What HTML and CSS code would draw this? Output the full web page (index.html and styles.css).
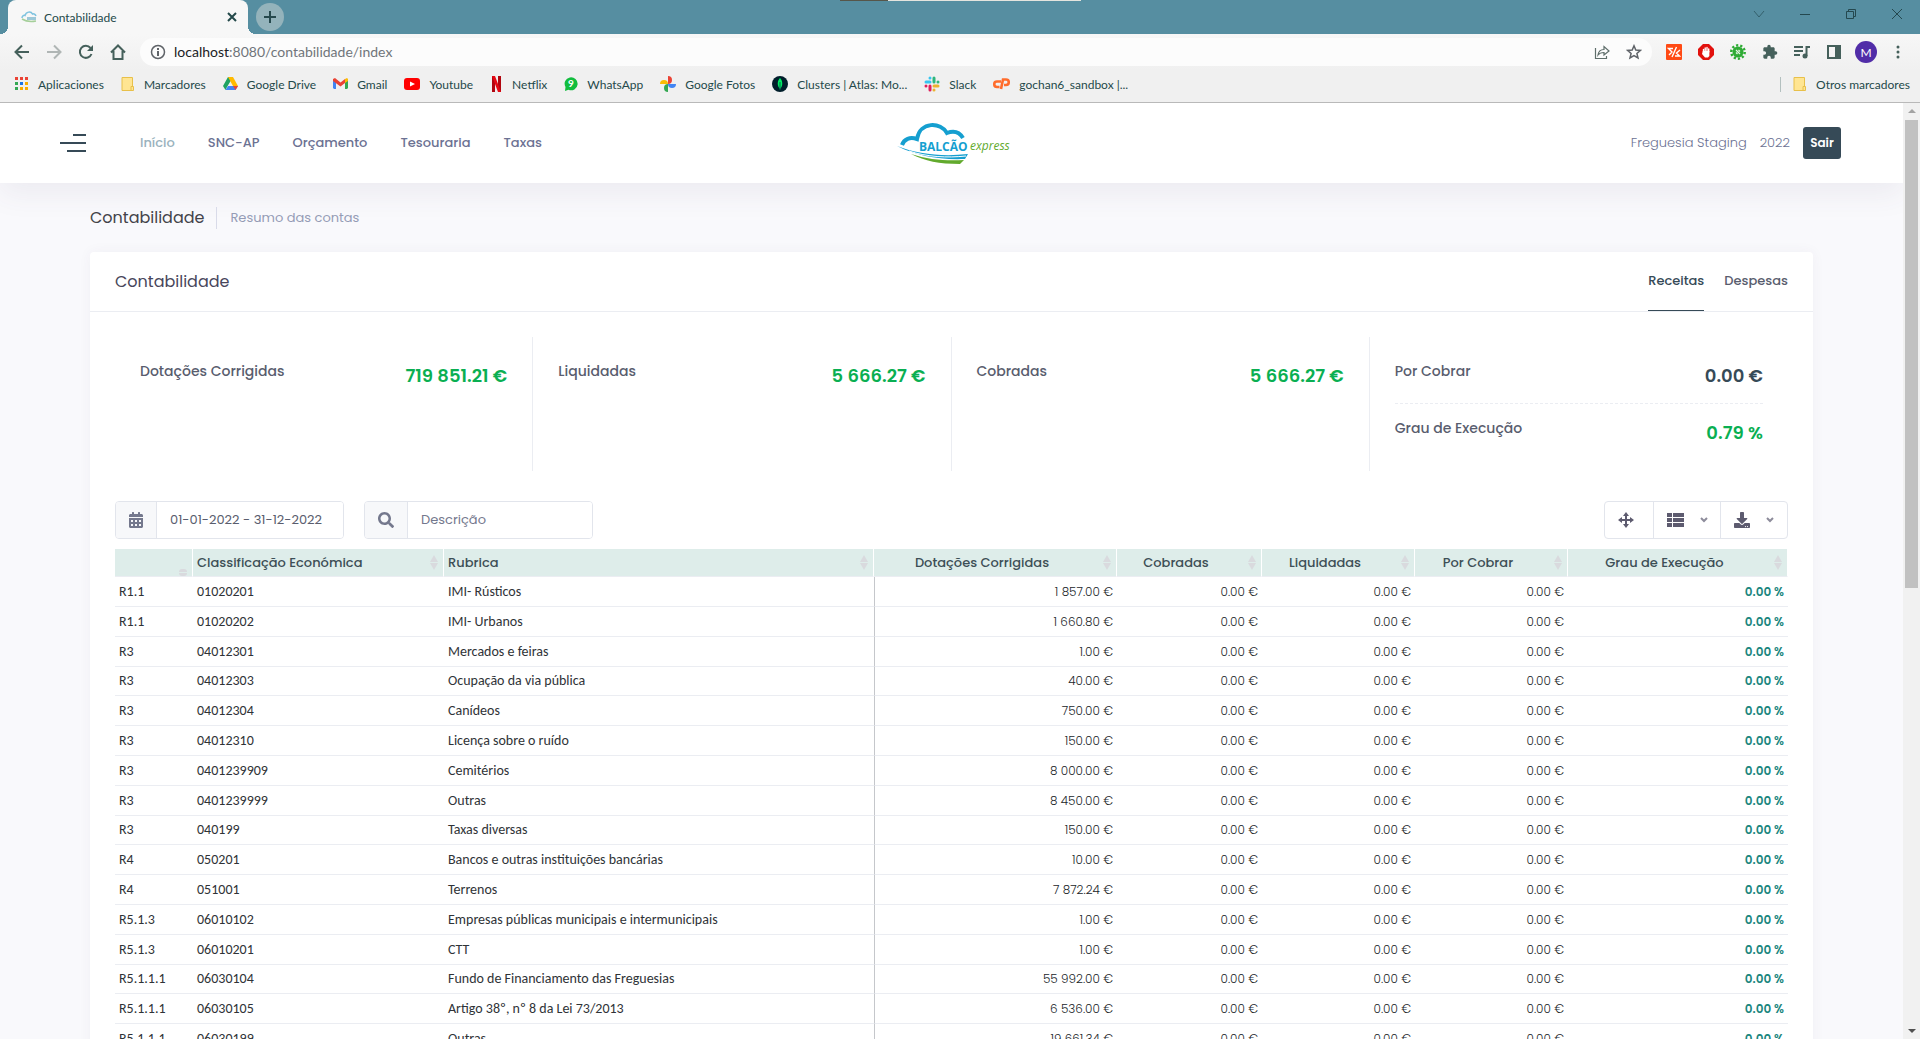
FILE: index.html
```html
<!DOCTYPE html>
<html lang="pt">
<head>
  <meta charset="UTF-8">
  <meta name="viewport" content="width=device-width, initial-scale=1.0">
  <title>Contabilidade</title>
  <link rel="stylesheet" href="styles.css">
</head>
<body>
  <div class="browser">
    <div class="tab-strip">
      <div class="tab">
        <svg width="16" height="12" viewBox="0 0 16 12"><path d="M1 7C1 5 2.500 4 4 4.500C5 0.500 10 0 11.500 3C13 2.500 14.500 3.500 15 5" fill="none" stroke="#7fc3df" stroke-width="1.500"/><path d="M6 6h9v3H6z" fill="#9cc8d8"/><path d="M1 8C5 10.500 10 11 15 10" fill="none" stroke="#a5cf9a" stroke-width="1.500"/></svg>
        <span class="tab-title">Contabilidade</span>
        <button class="tab-close" aria-label="Fechar"><svg width="10" height="10" viewBox="0 0 10 10"><path d="M1 1L9 9M9 1L1 9" stroke="#24494a" stroke-width="2"/></svg></button>
      </div>
      <button class="new-tab" aria-label="Novo separador"><svg width="12" height="12" viewBox="0 0 12 12"><path d="M6 0V12M0 6H12" stroke="#26494d" stroke-width="2"/></svg></button>
      <div class="drag-handle"></div>
      <div class="window-controls">
        <button aria-label="Procurar separadores"><svg width="12" height="12" viewBox="0 0 12 12"><path d="M1 3L6 9L11 3" fill="none" stroke="#34606c"/></svg></button>
        <button aria-label="Minimizar"><svg width="12" height="12" viewBox="0 0 12 12"><path d="M1 6.500H11" stroke="#24484f"/></svg></button>
        <button aria-label="Restaurar"><svg width="12" height="12" viewBox="0 0 12 12"><path d="M1.500 3.500h7v7h-7zM3.500 3.500v-2h7v7h-2" fill="none" stroke="#24484f"/></svg></button>
        <button aria-label="Fechar janela"><svg width="12" height="12" viewBox="0 0 12 12"><path d="M1 1L11 11M11 1L1 11" stroke="#24484f"/></svg></button>
      </div>
    </div>

    <div class="toolbar">
      <button class="tool" aria-label="Recuar"><svg width="16" height="16" viewBox="0 0 16 16"><path d="M15 8H2M8 1.500L1.500 8L8 14.500" fill="none" stroke="#45605b" stroke-width="2"/></svg></button>
      <button class="tool" aria-label="Avançar"><svg width="16" height="16" viewBox="0 0 16 16"><path d="M1 8H14M8 1.500L14.500 8L8 14.500" fill="none" stroke="#b0b6b5" stroke-width="2"/></svg></button>
      <button class="tool" aria-label="Atualizar"><svg width="16" height="16" viewBox="0 0 16 16"><path d="M13.500 10A6 6 0 1 1 12.500 4" fill="none" stroke="#45605b" stroke-width="2"/><path d="M15 1V7H9z" fill="#45605b"/></svg></button>
      <button class="tool" aria-label="Início"><svg width="16" height="16" viewBox="0 0 16 16"><path d="M1 8.500L8 1.500L15 8.500M3.500 7V15H12.500V7" fill="none" stroke="#45605b" stroke-width="2"/></svg></button>
      <div class="omnibox">
        <svg width="16" height="16" viewBox="0 0 16 16"><circle cx="8" cy="8" r="6.500" fill="none" stroke="#5f6368" stroke-width="1.500"/><path d="M8 7V12M8 4V6" stroke="#5f6368" stroke-width="2"/></svg>
        <div class="url"><span class="host">localhost</span>:8080/contabilidade/index</div>
        <button class="tool" aria-label="Partilhar"><svg width="16" height="16" viewBox="0 0 16 16"><path d="M1.500 4V14.500H12.500V12M4 11C4.500 7 7 5.500 10 5.500V2.500L15 7L10 11V8.500C7.500 8.500 5.500 9 4 11Z" fill="none" stroke="#5f6e6b" stroke-width="1.200"/></svg></button>
        <button class="tool" aria-label="Favorito"><svg width="16" height="16" viewBox="0 0 16 16"><path d="M8 1.800L9.800 6L14.300 6.400L10.900 9.400L12 13.900L8 11.500L4 13.900L5.100 9.400L1.700 6.400L6.200 6Z" fill="none" stroke="#5f6368" stroke-width="1.500"/></svg></button>
      </div>
      <div class="extensions">
        <button class="tool" aria-label="Extensão"><svg width="16" height="16" viewBox="0 0 16 16"><rect width="16" height="16" rx="1" fill="#ff4a14"/><path d="M7 4.500H2.500L6 8L3 11M10.500 3L6 13M9 12H13.500L10.500 9L14 6" fill="none" stroke="#fff" stroke-width="1.400"/></svg></button>
        <button class="tool" aria-label="AdBlock"><svg width="16" height="16" viewBox="0 0 16 16"><path d="M5 0H11L16 5V11L11 16H5L0 11V5Z" fill="#e2110d"/><path d="M5.500 8V5.500M7.200 8V4M9 8V3.500M10.700 8V5" stroke="#fff" stroke-width="1.400" stroke-linecap="round"/><path d="M4.800 7h6.600v5L10 13.500H7L4 10z" fill="#fff"/></svg></button>
        <button class="tool" aria-label="Extensão"><svg width="16" height="16" viewBox="0 0 16 16"><circle cx="8" cy="8" r="5.500" fill="#2fab35"/><circle cx="8" cy="8" r="6.700" fill="none" stroke="#2fab35" stroke-width="2.500" stroke-dasharray="2.200 2"/><path d="M6 6l4 4M6 8.500L7.500 10M8.500 6L10 7.500" stroke="#e8f5e8" stroke-width="1.200"/></svg></button>
        <button class="tool" aria-label="Extensões"><svg width="16" height="16" viewBox="0 0 24 24"><path d="M20.500 11H19V7c0-1.100-.9-2-2-2h-4V3.500a2.500 2.500 0 0 0-5 0V5H4c-1.100 0-2 .9-2 2v3.800h1.500a2.700 2.700 0 0 1 0 5.400H2V20c0 1.100.9 2 2 2h3.800v-1.500a2.700 2.700 0 0 1 5.400 0V22H17c1.100 0 2-.9 2-2v-4h1.500a2.500 2.500 0 0 0 0-5z" fill="#45605b"/></svg></button>
        <button class="tool" aria-label="Multimédia"><svg width="16" height="16" viewBox="0 0 16 16"><path d="M0 3H9M0 7H9M0 11H6M12.500 12V3H16" fill="none" stroke="#45605b" stroke-width="2"/><circle cx="11" cy="12" r="2.500" fill="#45605b"/></svg></button>
        <button class="tool" aria-label="Painel lateral"><svg width="16" height="16" viewBox="0 0 16 16"><path d="M2 2H14V14H2Z" fill="none" stroke="#45605b" stroke-width="2"/><path d="M9 2H14V14H9Z" fill="#45605b"/></svg></button>
        <button class="avatar">M</button>
        <button class="tool" aria-label="Menu"><svg width="16" height="16" viewBox="0 0 16 16"><circle cx="8" cy="3" r="1.500" fill="#45605b"/><circle cx="8" cy="8" r="1.500" fill="#45605b"/><circle cx="8" cy="13" r="1.500" fill="#45605b"/></svg></button>
      </div>
    </div>

    <div class="bookmarks">
      <a href="#"><svg width="14" height="14" viewBox="0 0 14 14"><path d="M0 0h3v3H0zM5 0h3v3H5zM10 0h3v3h-3z" fill="#ea4335"/><path d="M0 5h3v3H0z" fill="#34a853"/><path d="M5 5h3v3H5z" fill="#1a73e8"/><path d="M10 5h3v3h-3zM5 10h3v3H5zM10 10h3v3h-3z" fill="#f9ab00"/><path d="M0 10h3v3H0z" fill="#34a853"/></svg>Aplicaciones</a>
      <a href="#"><svg width="14" height="14" viewBox="0 0 14 14"><path d="M1 .5H11.500V13.500H1Z" fill="#ffe592" stroke="#e8c04a"/><path d="M10 9.500h2.500v4H10z" fill="#ffe592" stroke="#e8c04a"/></svg>Marcadores</a>
      <a href="#"><svg width="15" height="14" viewBox="0 0 15 14"><path d="M5 0H10L4 10L2.500 13L0 9Z" fill="#1ea362"/><path d="M5 0H10L15 9H10Z" fill="#ffba00"/><path d="M5 9H15L12.500 13H2.500Z" fill="#4285f4"/><path d="M10 9H15L12.500 13Z" fill="#ea4335"/></svg>Google Drive</a>
      <a href="#"><svg width="15" height="12" viewBox="0 0 15 12"><path d="M0 2H3V11H1L0 10Z" fill="#4285f4"/><path d="M12 2H15V10L14 11H12Z" fill="#34a853"/><path d="M0 2V1L2 0L7.500 4.500L12 1V5L7.500 8.500L0 3Z" fill="#ea4335"/><path d="M12 1L14 0L15 1V3L12 5Z" fill="#fbbc04"/></svg>Gmail</a>
      <a href="#"><svg width="16" height="12" viewBox="0 0 16 12"><rect width="16" height="12" rx="3" fill="#f00"/><path d="M6 3.500L11 6L6 8.500Z" fill="#fff"/></svg>Youtube</a>
      <a href="#"><svg width="13" height="16" viewBox="2 0 13 16"><path d="M4 0H7V16H4ZM10 0H13V16H10Z" fill="#b1060f"/><path d="M4 0H7L13 16H10Z" fill="#e50914"/></svg>Netflix</a>
      <a href="#"><svg width="14" height="16" viewBox="1 0 14 16"><path d="M2 15L2.500 11A6.500 6.500 0 1 1 5.500 13.700Z" fill="#12bd3e"/><text x="8" y="11" class="icon-digit">9</text></svg>WhatsApp</a>
      <a href="#"><svg width="16" height="16" viewBox="0 0 16 16"><path d="M8 0A4 4 0 0 1 8 8Z" fill="#ea4335"/><path d="M16 8A4 4 0 0 1 8 8Z" fill="#4285f4"/><path d="M8 16A4 4 0 0 1 8 8Z" fill="#34a853"/><path d="M0 8A4 4 0 0 1 8 8Z" fill="#fbbc04"/></svg>Google Fotos</a>
      <a href="#"><svg width="16" height="16" viewBox="0 0 16 16"><circle cx="8" cy="8" r="8" fill="#001e2b"/><path d="M8 2C5 5 5 10 8 13C11 10 11 5 8 2Z" fill="#00ed64"/><path d="M8 6V14" stroke="#00684a"/></svg>Clusters | Atlas: Mo...</a>
      <a href="#"><svg width="16" height="16" viewBox="0 0 16 16"><g fill="none" stroke-width="3" stroke-linecap="round"><path d="M2 6H6M6 2V2" stroke="#36c5f0"/><path d="M10 2V6M14 6V6" stroke="#2eb67d"/><path d="M10 10H14M10 14V14" stroke="#ecb22e"/><path d="M6 10V14M2 10V10" stroke="#e01e5a"/></g></svg>Slack</a>
      <a href="#"><svg width="17" height="12" viewBox="0 0 17 12"><path d="M8 3.500H4A2.700 2.700 0 0 0 4 9H6.500M8 11L10 1.500H13A2.700 2.700 0 0 1 13 7H11" fill="none" stroke="#ff6c2c" stroke-width="2.600"/></svg>gochan6_sandbox |...</a>
      <a href="#" class="other-bookmarks"><svg width="14" height="14" viewBox="0 0 14 14"><path d="M1 .5H11.500V13.500H1Z" fill="#ffe592" stroke="#e8c04a"/><path d="M10 9.500h2.500v4H10z" fill="#ffe592" stroke="#e8c04a"/></svg>Otros marcadores</a>
    </div>
  </div>

  <div class="viewport">
    <div class="page">
      <header class="header">
        <div class="menu">
          <button class="hamburger" aria-label="Menu"><span></span><span></span><span></span></button>
          <nav class="nav">
            <a href="#" class="active">Início</a>
            <a href="#">SNC-AP</a>
            <a href="#">Orçamento</a>
            <a href="#">Tesouraria</a>
            <a href="#">Taxas</a>
          </nav>
        </div>
        <a href="#" class="logo" aria-label="Balcão express">
          <svg width="120" height="48" viewBox="-6 -3 120 48">
            <path d="M5 23C7 17 13 14.500 20 17C23 -1 44 0 50 11C58 8 63 11 66 16" fill="none" stroke="#159fd0" stroke-width="4"/>
            <path d="M0 24C20 32 45 35 71 32L68 37C42 38 20 34 0 24Z" fill="#159fd0"/>
            <path d="M14 32C32 38 50 39 67 38L63 42C42 42 28 39 14 32Z" fill="#62aa2d"/>
            <path d="M12 29C30 35 50 36 69 34" fill="none" stroke="#fff"/>
            <text x="22" y="29" class="logo-name">BALCÃO</text>
            <text x="73" y="28" class="logo-sub">express</text>
          </svg>
        </a>
        <div class="user">
          <span>Freguesia Staging</span>
          <span>2022</span>
          <button class="btn-exit">Sair</button>
        </div>
      </header>

      <div class="subheader">
        <h1>Contabilidade</h1>
        <span class="separator"></span>
        <span class="subtitle">Resumo das contas</span>
      </div>

      <main class="card">
        <div class="card-head">
          <h2>Contabilidade</h2>
          <div class="tabs">
            <a href="#" class="active">Receitas</a>
            <a href="#">Despesas</a>
          </div>
        </div>

        <div class="card-body">
          <div class="stats">
            <div class="stat">
              <div class="stat-row"><span>Dotações Corrigidas</span><strong class="green">719 851.21 €</strong></div>
            </div>
            <div class="stat">
              <div class="stat-row"><span>Liquidadas</span><strong class="green">5 666.27 €</strong></div>
            </div>
            <div class="stat">
              <div class="stat-row"><span>Cobradas</span><strong class="green">5 666.27 €</strong></div>
            </div>
            <div class="stat">
              <div class="stat-row"><span>Por Cobrar</span><strong>0.00 €</strong></div>
              <div class="stat-row dashed"><span>Grau de Execução</span><strong class="green">0.79 %</strong></div>
            </div>
          </div>

          <div class="filters">
            <div class="input-group">
              <label for="dates" aria-label="Datas"><svg width="14" height="16" viewBox="0 0 448 512"><path fill="currentColor" d="M0 464c0 26.500 21.500 48 48 48h352c26.500 0 48-21.500 48-48V192H0v272zm320-196c0-6.600 5.400-12 12-12h40c6.600 0 12 5.400 12 12v40c0 6.600-5.400 12-12 12h-40c-6.600 0-12-5.400-12-12v-40zm0 128c0-6.600 5.400-12 12-12h40c6.600 0 12 5.400 12 12v40c0 6.600-5.400 12-12 12h-40c-6.600 0-12-5.400-12-12v-40zM192 268c0-6.600 5.400-12 12-12h40c6.600 0 12 5.400 12 12v40c0 6.600-5.400 12-12 12h-40c-6.600 0-12-5.400-12-12v-40zm0 128c0-6.600 5.400-12 12-12h40c6.600 0 12 5.400 12 12v40c0 6.600-5.400 12-12 12h-40c-6.600 0-12-5.400-12-12v-40zM64 268c0-6.600 5.400-12 12-12h40c6.600 0 12 5.400 12 12v40c0 6.600-5.400 12-12 12H76c-6.600 0-12-5.400-12-12v-40zm0 128c0-6.600 5.400-12 12-12h40c6.600 0 12 5.400 12 12v40c0 6.600-5.400 12-12 12H76c-6.600 0-12-5.400-12-12v-40zM400 64h-48V16c0-8.800-7.200-16-16-16h-32c-8.800 0-16 7.200-16 16v48H160V16c0-8.800-7.200-16-16-16h-32c-8.800 0-16 7.200-16 16v48H48C21.500 64 0 85.500 0 112v48h448v-48c0-26.500-21.500-48-48-48z"/></svg></label>
              <input type="text" id="dates" value="01-01-2022 - 31-12-2022">
            </div>
            <div class="input-group">
              <label for="search" aria-label="Descrição"><svg width="16" height="16" viewBox="0 0 512 512"><path fill="currentColor" d="M505 442.700L405.300 343c-4.500-4.500-10.600-7-17-7H372c27.600-35.300 44-79.700 44-128C416 93.100 322.900 0 208 0S0 93.100 0 208s93.100 208 208 208c48.300 0 92.700-16.400 128-44v16.300c0 6.400 2.500 12.500 7 17l99.700 99.700c9.400 9.400 24.600 9.400 33.900 0l28.300-28.300c9.400-9.400 9.400-24.600.1-34zM208 336c-70.700 0-128-57.200-128-128 0-70.700 57.200-128 128-128 70.700 0 128 57.200 128 128 0 70.700-57.200 128-128 128z"/></svg></label>
              <input type="text" id="search" placeholder="Descrição">
            </div>
            <div class="btn-group">
              <button aria-label="Expandir"><svg width="16" height="16" viewBox="0 0 16 16"><path d="M8 2V14M2 8H14" stroke="currentColor" stroke-width="2"/><path d="M8 0L11 4H5ZM8 16L11 12H5ZM0 8L4 5V11ZM16 8L12 5V11Z" fill="currentColor"/></svg></button>
              <button aria-label="Colunas"><svg width="17" height="16" viewBox="0 0 17 16"><path d="M0 1h5v4H0zM6 1h11v4H6zM0 6h5v4H0zM6 6h11v4H6zM0 11h5v4H0zM6 11h11v4H6z" fill="currentColor"/></svg><svg class="caret" width="8" height="6" viewBox="0 0 8 6"><path d="M1 1L4 4L7 1" fill="none" stroke="currentColor" stroke-width="2"/></svg></button>
              <button aria-label="Exportar"><svg width="16" height="16" viewBox="0 0 512 512"><path fill="currentColor" d="M216 0h80c13.300 0 24 10.700 24 24v168h87.700c17.800 0 26.700 21.500 14.100 34.100L269.700 378.300c-7.500 7.500-19.800 7.500-27.300 0L90.100 226.100c-12.600-12.600-3.700-34.100 14.100-34.100H192V24c0-13.300 10.700-24 24-24zm296 376v112c0 13.300-10.700 24-24 24H24c-13.300 0-24-10.700-24-24V376c0-13.300 10.700-24 24-24h146.700l49 49c20.100 20.100 52.500 20.100 72.600 0l49-49H488c13.300 0 24 10.700 24 24zm-124 88c0-11-9-20-20-20s-20 9-20 20 9 20 20 20 20-9 20-20zm64 0c0-11-9-20-20-20s-20 9-20 20 9 20 20 20 20-9 20-20z"/></svg><svg class="caret" width="8" height="6" viewBox="0 0 8 6"><path d="M1 1L4 4L7 1" fill="none" stroke="currentColor" stroke-width="2"/></svg></button>
            </div>
          </div>

          <table class="grid">
            <colgroup>
              <col class="col-group"><col class="col-class"><col><col class="col-total"><col class="col-amount"><col class="col-liq"><col class="col-liq"><col class="col-grade">
            </colgroup>
            <thead>
              <tr>
                <th><div class="th empty"><span></span><i class="sort"></i></div></th>
                <th><div class="th"><span>Classificação Económica</span><i class="sort"></i></div></th>
                <th><div class="th"><span>Rubrica</span><i class="sort"></i></div></th>
                <th><div class="th center"><span>Dotações Corrigidas</span><i class="sort"></i></div></th>
                <th><div class="th center"><span>Cobradas</span><i class="sort"></i></div></th>
                <th><div class="th center"><span>Liquidadas</span><i class="sort"></i></div></th>
                <th><div class="th center"><span>Por Cobrar</span><i class="sort"></i></div></th>
                <th><div class="th center"><span>Grau de Execução</span><i class="sort"></i></div></th>
              </tr>
            </thead>
            <tbody id="rows"></tbody>
          </table>
        </div>
      </main>
    </div>
    <div class="scrollbar"><i class="arrow up"></i><span class="thumb"></span><i class="arrow down"></i></div>
  </div>

  <script>
    var rows = [
      ['R1.1', '01020201', 'IMI- Rústicos', '1 857.00 €'],
      ['R1.1', '01020202', 'IMI- Urbanos', '1 660.80 €'],
      ['R3', '04012301', 'Mercados e feiras', '1.00 €'],
      ['R3', '04012303', 'Ocupação da via pública', '40.00 €'],
      ['R3', '04012304', 'Canídeos', '750.00 €'],
      ['R3', '04012310', 'Licença sobre o ruído', '150.00 €'],
      ['R3', '0401239909', 'Cemitérios', '8 000.00 €'],
      ['R3', '0401239999', 'Outras', '8 450.00 €'],
      ['R3', '040199', 'Taxas diversas', '150.00 €'],
      ['R4', '050201', 'Bancos e outras instituições bancárias', '10.00 €'],
      ['R4', '051001', 'Terrenos', '7 872.24 €'],
      ['R5.1.3', '06010102', 'Empresas públicas municipais e intermunicipais', '1.00 €'],
      ['R5.1.3', '06010201', 'CTT', '1.00 €'],
      ['R5.1.1.1', '06030104', 'Fundo de Financiamento das Freguesias', '55 992.00 €'],
      ['R5.1.1.1', '06030105', 'Artigo 38º, nº 8 da Lei 73/2013', '6 536.00 €'],
      ['R5.1.1.1', '06030199', 'Outras', '19 661.34 €']
    ];

    var html = '';
    rows.forEach(function(row) {
      html += `
        <tr>
          <td>${row[0]}</td>
          <td>${row[1]}</td>
          <td>${row[2]}</td>
          <td class="num total">${row[3]}</td>
          <td class="num">0.00 €</td>
          <td class="num">0.00 €</td>
          <td class="num">0.00 €</td>
          <td class="num grade">0.00 %</td>
        </tr>
      `;
    });
    document.getElementById('rows').innerHTML = html;
  </script>
</body>
</html>
```
FILE: styles.css
```css
* {
  box-sizing: border-box;
}

body {
  display: flex;
  flex-direction: column;
  height: 100vh;
  margin: 0;
  overflow: hidden;
  font-family: Poppins, Inter, sans-serif;
  font-size: 13px;
  color: #646c9a;
  background-color: #f9f9fc;
}

a {
  color: inherit;
  text-decoration: none;
}

button {
  display: flex;
  align-items: center;
  justify-content: center;
  padding: 0;
  border: none;
  background: none;
  font-family: inherit;
  cursor: pointer;
}

svg {
  flex: none;
  display: block;
}

/* browser window */
.browser {
  flex: none;
  font-family: "Segoe UI", Lato, sans-serif;
  font-size: 12px;
  color: #24494a;
  background-color: #f0f0f0;
  border-bottom: 1px solid #b9b9b9;
}

.tab-strip {
  position: relative;
  display: flex;
  height: 34px;
  padding-left: 8px;
  background-color: #568ea1;
}

.drag-handle {
  position: absolute;
  top: 0;
  left: 840px;
  width: 241px;
  height: 1px;
  background-color: #e4e4de;
  border-left: 48px solid #56564a;
}

.tab {
  position: relative;
  display: flex;
  align-items: center;
  width: 240px;
  padding: 0 8px 0 13px;
  background-color: #f7f7f7;
  border-radius: 8px 8px 0 0;
}

.tab::before,
.tab::after {
  content: "";
  position: absolute;
  bottom: 0;
  left: -8px;
  width: 8px;
  height: 8px;
  background: radial-gradient(circle at 0 0, transparent 8px, #f7f7f7 8px);
}

.tab::after {
  left: 240px;
  background: radial-gradient(circle at 8px 0, transparent 8px, #f7f7f7 8px);
}

.tab-title {
  flex: 1;
  margin-left: 7px;
}

.tab-close {
  width: 16px;
  height: 16px;
}

.new-tab {
  width: 28px;
  height: 28px;
  margin: 3px 0 0 8px;
  background-color: #94b3bb;
  border-radius: 50%;
}

.window-controls {
  display: flex;
  margin-left: auto;
}

.window-controls button {
  width: 46px;
  height: 28px;
}

.toolbar {
  display: flex;
  align-items: center;
  gap: 16px;
  height: 36px;
  padding: 0 14px;
  background: linear-gradient(#f7f7f7, #f0f0f0);
}

.tool {
  flex: none;
  width: 16px;
  height: 16px;
}

.omnibox {
  flex: 1;
  display: flex;
  align-items: center;
  gap: 16px;
  height: 28px;
  margin: 0 -2px;
  padding: 0 10px;
  background-color: #fcfcfc;
  border-radius: 14px;
  font-size: 14px;
  line-height: 16px;
  color: #70757a;
}

.url {
  flex: 1;
  margin-left: -8px;
}

.host {
  color: #202124;
}

.extensions {
  display: flex;
  align-items: center;
  gap: 16px;
}

.avatar {
  width: 22px;
  height: 22px;
  margin: 0 -3px;
  border-radius: 50%;
  background-color: #512da8;
  color: #fff;
  font-size: 12px;
}

.bookmarks {
  display: flex;
  align-items: center;
  gap: 17px;
  height: 32px;
  padding: 0 10px 4px 15px;
}

.bookmarks a {
  display: flex;
  align-items: center;
  gap: 9px;
  white-space: nowrap;
}

.bookmarks .other-bookmarks {
  margin-left: auto;
  padding-left: 12px;
  border-left: 1px solid #b3c0bf;
}

.icon-digit {
  fill: #fff;
  font-size: 10px;
  font-weight: bold;
  text-anchor: middle;
}

/* page */
.viewport {
  flex: 1;
  display: flex;
  min-height: 0;
}

.page {
  flex: 1;
  min-width: 0;
  overflow: hidden;
}

.header {
  position: relative;
  display: flex;
  align-items: center;
  height: 80px;
  padding: 0 62px 0 60px;
  background-color: #fff;
  box-shadow: 0 10px 30px rgba(82, 63, 105, 0.08);
}

.menu {
  flex: 1;
  display: flex;
  align-items: center;
}

.hamburger {
  flex-direction: column;
  align-items: flex-end;
  gap: 6px;
}

.hamburger span {
  width: 19px;
  height: 2px;
  background-color: #364a57;
}

.hamburger span:nth-child(1) {
  width: 13px;
}

.hamburger span:nth-child(2) {
  width: 26px;
}

.nav {
  display: flex;
  gap: 33px;
  margin-left: 54px;
  font-weight: 500;
  color: #6c7293;
}

.nav .active {
  color: #9ab2bd;
}

.logo-name {
  fill: #159fd0;
  font-family: "Open Sans", sans-serif;
  font-size: 12px;
  font-weight: bold;
}

.logo-sub {
  fill: #62aa2d;
  font-family: "Open Sans", sans-serif;
  font-size: 12px;
  font-style: italic;
}

.user {
  flex: 1;
  display: flex;
  align-items: center;
  justify-content: flex-end;
  gap: 13px;
  font-weight: 300;
  color: #6c7293;
}

.btn-exit {
  width: 38px;
  height: 32px;
  background-color: #364a57;
  border-radius: 3px;
  color: #fff;
  font-size: 12px;
  font-weight: 600;
}

.subheader {
  position: relative;
  display: flex;
  align-items: center;
  height: 69px;
  padding: 0 90px;
}

.subheader h1 {
  margin: 0;
  font-size: 16px;
  font-weight: 400;
  color: #434349;
}

.separator {
  width: 1px;
  height: 22px;
  margin: 0 13px 0 12px;
  background-color: #d9dbe9;
}

.subtitle {
  color: #959cb6;
}

.card {
  margin: 0 90px;
  background-color: #fff;
  border-radius: 4px;
  box-shadow: 0 0 13px rgba(82, 63, 105, 0.05);
}

.card-head {
  display: flex;
  justify-content: space-between;
  height: 60px;
  padding: 0 25px;
  border-bottom: 1px solid #ebedf2;
}

.card-head h2 {
  align-self: center;
  margin: 0;
  font-size: 16px;
  font-weight: 400;
  color: #48465b;
}

.tabs {
  display: flex;
  gap: 20px;
  font-weight: 500;
  color: #595d6e;
}

.tabs a {
  display: flex;
  align-items: center;
  border-bottom: 1px solid transparent;
}

.tabs .active {
  color: #364a57;
  border-color: #364a57;
}

.card-body {
  padding: 25px;
}

.stats {
  display: grid;
  grid-template-columns: repeat(4, 1fr);
}

.stat {
  min-height: 134px;
  padding: 21px 25px 0;
  border-right: 1px solid #ebedf2;
}

.stat:last-child {
  border-right: none;
}

.stat-row {
  display: flex;
  justify-content: space-between;
  padding-bottom: 14px;
  font-size: 14px;
  font-weight: 500;
  line-height: 26px;
  color: #595d6e;
}

.stat-row strong {
  padding-top: 5px;
  font-size: 18px;
  font-weight: 600;
  color: #364a57;
}

.stat-row.dashed {
  padding-top: 11px;
  border-top: 1px dashed #ebedf2;
}

.stat-row .green {
  color: #0aaf52;
}

.filters {
  display: flex;
  gap: 20px;
  margin-top: 30px;
}

.input-group {
  display: flex;
  width: 229px;
  height: 38px;
  border: 1px solid #e2e5ec;
  border-radius: 4px;
  overflow: hidden;
}

.input-group label {
  flex: none;
  display: flex;
  align-items: center;
  padding: 0 13px;
  background-color: #f7f8fa;
  border-right: 1px solid #e2e5ec;
  color: #74788d;
}

.input-group input {
  flex: 1;
  min-width: 0;
  padding: 0 13px;
  border: none;
  font-family: inherit;
  font-size: 13px;
  color: #595d6e;
}

.input-group input::placeholder {
  color: #74788d;
}

.btn-group {
  display: flex;
  margin-left: auto;
  border: 1px solid #e2e5ec;
  border-radius: 4px;
  color: #5d5b6f;
}

.btn-group button {
  gap: 16px;
  width: 67px;
  color: inherit;
}

.btn-group button:first-child {
  width: 48px;
  padding-right: 6px;
}

.btn-group button + button {
  border-left: 1px solid #e2e5ec;
}

.caret {
  color: #8d8c9b;
}

.grid {
  width: 100%;
  margin-top: 10px;
  border-spacing: 0;
  table-layout: fixed;
}

.col-group {
  width: 78px;
}

.col-class {
  width: 251px;
}

.col-total {
  width: 243px;
}

.col-amount {
  width: 145px;
}

.col-liq {
  width: 153px;
}

.col-grade {
  width: 220px;
}

.grid th {
  height: 28px;
  padding: 0;
  background-color: #deedea;
  border-right: 1px solid #fff;
  border-bottom: 1px solid #ebedf2;
  font-weight: 500;
  color: #3d4f56;
  text-align: left;
}

.th {
  display: flex;
  align-items: center;
  justify-content: space-between;
  height: 27px;
  padding: 0 5px 0 4px;
}

.th.center span {
  flex: 1;
  padding-right: 17px;
  text-align: center;
}

/* up and down sort triangles */
.sort {
  display: flex;
  flex-direction: column;
  gap: 1px;
}

.sort::before,
.sort::after {
  content: "";
  border: 4px solid transparent;
}

.sort::before {
  border-top: none;
  border-bottom: 7px solid #d9dade;
}

.sort::after {
  border-bottom: none;
  border-top: 7px solid #d9dade;
}

.empty {
  align-items: flex-end;
}

.empty .sort {
  width: 8px;
  height: 7px;
  border-radius: 3px;
  background: linear-gradient(#d9dade 3px, #deedea 3px, #deedea 4px, #d9dade 4px);
}

.empty .sort::before,
.empty .sort::after {
  display: none;
}

.grid td {
  height: 30px;
  padding: 0 4px;
  border-bottom: 1px solid #ebedf2;
  font-family: "Calibri Light", Calibri, Carlito, Lato, sans-serif;
  font-size: 14px;
  font-weight: 300;
  line-height: 20px;
  color: #2f3337;
}

.grid tr:nth-child(5n+4) td {
  height: 29px;
}

.grid td.num {
  font-family: Poppins, Inter, sans-serif;
  font-size: 12px;
  color: #212529;
  text-align: right;
}

.grid td.total {
  border-left: 1px solid #c5c7cb;
}

.grid td.grade {
  font-weight: 600;
  color: #1a857e;
}

.scrollbar {
  flex: none;
  display: flex;
  flex-direction: column;
  align-items: center;
  width: 17px;
  background-color: #f1f1f1;
}

.arrow {
  border: 4px solid transparent;
}

.up {
  margin: 2px 0 7px;
  border-bottom-color: #a3a3a3;
}

.down {
  margin: auto 0 6px;
  border-top-color: #505050;
  border-bottom: none;
}

.thumb {
  width: 13px;
  height: 50%;
  background-color: #c1c1c1;
}
```
